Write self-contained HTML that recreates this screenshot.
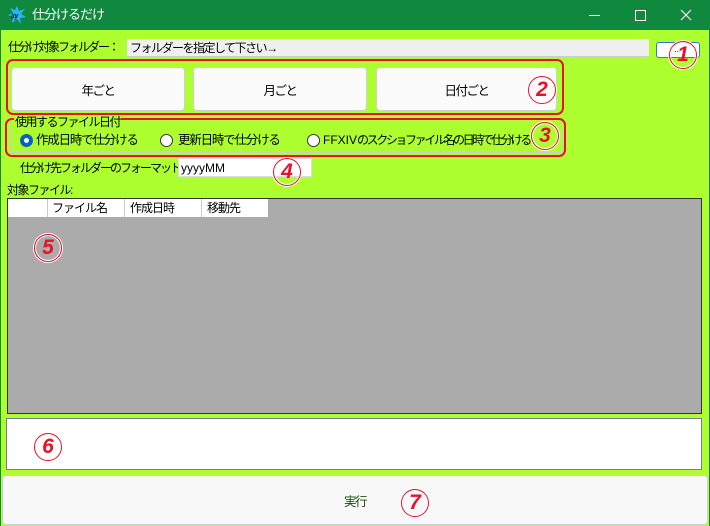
<!DOCTYPE html>
<html><head><meta charset="utf-8"><style>
*{margin:0;padding:0;box-sizing:border-box}
body{width:710px;height:526px;overflow:hidden;background:#adff2f;font-family:"Liberation Sans","Noto Sans CJK JP",sans-serif;font-size:12px;color:#000;position:relative;letter-spacing:-2px}
.a{position:absolute}
.title{left:0;top:0;width:710px;height:30px;background:#10883e;color:#fff;font-size:13px}
.btn{background:#fbfbfb;border:1px solid #d0d0d0;border-radius:4px;display:flex;align-items:center;justify-content:center;font-size:12.5px;letter-spacing:-1.5px}
.red{border:2px solid #e8102a;border-radius:7px}
.num{width:28px;height:28px;border:1.5px solid #e8102a;border-radius:50%;color:#e8102a;font:italic bold 21px "Liberation Sans",sans-serif;letter-spacing:0;display:flex;align-items:center;justify-content:center;box-shadow:0 0 0 1px #fff, inset 0 0 0 1px #fff;z-index:5}
.radio{width:13px;height:13px;border:1px solid #333;border-radius:50%;background:#fff}
.lbl{white-space:nowrap;line-height:14px}
.rl{font-size:12.5px;letter-spacing:-1.2px}
.en{letter-spacing:0}
</style></head><body>
<div class="a title">
  <svg class="a" style="left:8px;top:6px" width="18" height="18" viewBox="0 0 18 18"><polygon points="9,0 11,5 17,3 13,8 18,11 12,12 13,18 9,13 4,17 5,11 0,9 5,7 2,2 7,4" fill="#29b6f6"/><text x="3" y="12" font-size="7" font-style="italic" fill="#000" font-family="Liberation Sans">Lny</text></svg>
  <div class="a lbl" style="left:32px;top:8px;letter-spacing:-1px">仕分けるだけ</div>
  <div class="a" style="left:589px;top:15px;width:11px;height:1px;background:#fff"></div>
  <div class="a" style="left:635px;top:10px;width:11px;height:11px;border:1px solid #fff"></div>
  <svg class="a" style="left:680px;top:9px" width="12" height="12"><path d="M1 1L11 11M11 1L1 11" stroke="#fff" stroke-width="1.2"/></svg>
</div>
<div class="a" style="left:0;top:30px;width:1px;height:496px;background:#10883e"></div>
<div class="a" style="right:0;top:30px;width:1px;height:496px;background:#10883e"></div>

<div class="a lbl" style="left:8px;top:40px">仕分け対象フォルダー：</div>
<div class="a lbl" style="left:127px;top:39px;width:522px;height:18px;background:#f0f0f0;border-bottom:1px solid #ccc;padding:2px 3px;letter-spacing:-1.5px">フォルダーを指定して下さい→</div>
<div class="a" style="left:656px;top:42px;width:44px;height:16px;background:#fff;border:1px solid #2b7ae0;border-radius:3px"></div>
<div class="a lbl en" style="left:674px;top:42px;font-size:9px">..</div>
<div class="a num" style="left:669px;top:41px">1</div>

<div class="a red" style="left:6px;top:59px;width:558px;height:56px"></div>
<div class="a btn" style="left:11px;top:67px;width:174px;height:44px">年ごと</div>
<div class="a btn" style="left:193px;top:67px;width:174px;height:44px">月ごと</div>
<div class="a btn" style="left:376px;top:67px;width:181px;height:44px">日付ごと</div>
<div class="a num" style="left:528px;top:76px">2</div>

<div class="a" style="left:10px;top:123px;width:553px;height:30px;border:1px solid #ccc"></div>
<div class="a red" style="left:5px;top:118px;width:561px;height:39px"></div>
<div class="a lbl" style="left:14px;top:115px;background:#adff2f;padding:0 1px;letter-spacing:-1.5px">使用するファイル日付</div>
<div class="a radio" style="left:20px;top:134px;border:4px solid #0a5fc4"></div>
<div class="a lbl rl" style="left:36px;top:133px">作成日時で仕分ける</div>
<div class="a radio" style="left:160px;top:134px"></div>
<div class="a lbl rl" style="left:178px;top:133px">更新日時で仕分ける</div>
<div class="a radio" style="left:307px;top:134px"></div>
<div class="a lbl" style="left:323px;top:133px;font-size:12px;letter-spacing:-2.4px"><span class="en">FFXIV</span>のスクショファイル名の日時で仕分ける</div>
<div class="a num" style="left:531px;top:122px">3</div>

<div class="a lbl" style="left:20px;top:161px;letter-spacing:-2px">仕分け先フォルダーのフォーマット:</div>
<div class="a lbl en" style="left:178px;top:158px;width:134px;height:19px;background:#fff;border:1px solid #ddd;padding:2px 2px;z-index:2">yyyyMM</div>
<div class="a num" style="left:273px;top:158px">4</div>

<div class="a lbl" style="left:7px;top:183px;letter-spacing:-1.5px">対象ファイル:</div>
<div class="a" style="left:7px;top:198px;width:695px;height:216px;background:#ababab;border:1px solid #333"></div>
<div class="a" style="left:8px;top:199px;width:260px;height:18px;background:#fff"></div>
<div class="a" style="left:47px;top:199px;width:1px;height:18px;background:#ccc"></div>
<div class="a" style="left:124px;top:199px;width:1px;height:18px;background:#ccc"></div>
<div class="a" style="left:201px;top:199px;width:1px;height:18px;background:#ccc"></div>
<div class="a lbl" style="left:52px;top:201px;letter-spacing:-1px">ファイル名</div>
<div class="a lbl" style="left:130px;top:201px;letter-spacing:-1px">作成日時</div>
<div class="a lbl" style="left:207px;top:201px;letter-spacing:-1px">移動先</div>
<div class="a num" style="left:34px;top:234px">5</div>

<div class="a" style="left:6px;top:418px;width:696px;height:52px;background:#fff;border:1px solid #7a7a9a"></div>
<div class="a num" style="left:34px;top:433px">6</div>

<div class="a btn" style="left:2px;top:475px;width:706px;height:50px;background:#f8f8f8;color:#1a4a10">実行</div>
<div class="a num" style="left:401px;top:489px">7</div>
</body></html>
